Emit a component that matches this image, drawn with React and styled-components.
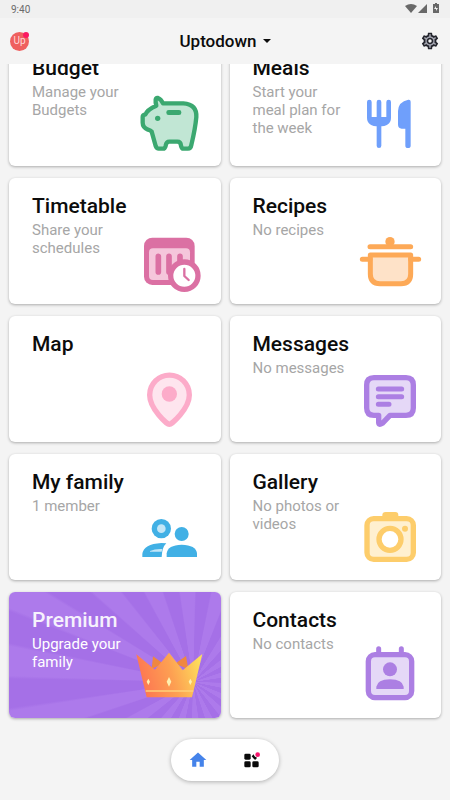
import React, { useLayoutEffect, useRef } from 'react';
import styled, { createGlobalStyle } from 'styled-components';
import { MdHome, MdOutlineSettings } from 'react-icons/md';

const GlobalStyle = createGlobalStyle`
  * {
    box-sizing: border-box;
  }

  body {
    margin: 0;
    background: #f4f4f4;
    font-family: Roboto, sans-serif;
    color: #0c0c0c;
  }

  button {
    font-family: inherit;
    color: inherit;
    border: none;
    cursor: pointer;
  }
`;

const Screen = styled.div`
  height: 100vh;
  display: flex;
  flex-direction: column;
  position: relative;
`;

const StatusBar = styled.div`
  display: flex;
  align-items: center;
  justify-content: space-between;
  height: 18px;
  padding: 0 11px;
  background: #f0f0f0;
  color: #6b6b6b;
  font-size: 10px;
  flex-shrink: 0;
`;

const Header = styled.header`
  display: grid;
  grid-template-columns: 20px 1fr 20px;
  align-items: center;
  height: 46px;
  padding: 0 10px;
  flex-shrink: 0;
`;

const Avatar = styled.button`
  width: 19px;
  height: 19px;
  padding: 0;
  border-radius: 50%;
  background: #ef605f;
  color: #ffd9d9;
  font-size: 10px;
  line-height: 18px;
  text-align: center;
  position: relative;

  &::after {
    content: '';
    position: absolute;
    top: 0;
    right: 0;
    width: 6px;
    height: 6px;
    border-radius: 50%;
    background: #fb1a62;
  }
`;

const CircleName = styled.button`
  display: flex;
  align-items: center;
  justify-content: center;
  gap: 6px;
  background: none;
  padding: 0;
  font-size: 17px;
  font-weight: 500;
  line-height: 24px;
`;

const SettingsButton = styled.button`
  display: flex;
  justify-content: center;
  padding: 0;
  background: radial-gradient(circle, transparent 2px, #a3a5b0 3px 6px, transparent 7px);
  color: #23242c;
`;

const Content = styled.main`
  flex: 1;
  min-height: 0;
  overflow-y: auto;
  scrollbar-width: none;
`;

const CardGrid = styled.div`
  display: grid;
  grid-template-columns: 1fr 1fr;
  gap: 12px 9px;
  padding: 12px 9px 82px;
`;

const Card = styled.button`
  display: flex;
  align-items: flex-start;
  justify-content: space-between;
  min-height: 126px;
  padding: 16px 15px 6px 23px;
  border-radius: 6px;
  text-align: left;
  background: ${props => props.$premium
    ? 'repeating-conic-gradient(from 12deg at 184px 90px, #ad7aeb 0deg 9deg, #a570e7 10deg 19deg, #ad7aeb 20deg)'
    : '#ffffff'};
  color: ${props => props.$premium ? '#ffffff' : '#0c0c0c'};
  box-shadow: 0 1px 3px rgba(0, 0, 0, 0.3);
`;

const CardText = styled.span`
  display: flex;
  flex-direction: column;
  gap: 3px;
  width: 98px;
`;

const CardTitle = styled.span`
  font-size: 21px;
  font-weight: 500;
  line-height: 24px;
  opacity: ${props => props.$premium ? 0.9 : 1};
`;

const CardInfo = styled.span`
  font-size: 15px;
  line-height: 18px;
  color: ${props => props.$premium ? '#ffffff' : '#a6a6a6'};
`;

const CardIcon = styled.svg`
  width: 72px;
  height: 72px;
  flex-shrink: 0;
  align-self: flex-end;
`;

const BottomNav = styled.nav`
  position: absolute;
  bottom: 19px;
  left: 50%;
  transform: translateX(-50%);
  display: flex;
  height: 42px;
  width: 108px;
  border-radius: 21px;
  background: #ffffff;
  box-shadow: 0 1px 4px rgba(0, 0, 0, 0.28);
`;

const NavButton = styled.button`
  flex: 1;
  display: flex;
  align-items: center;
  justify-content: center;
  padding: 0;
  background: none;
  color: ${props => props.$active ? '#4583ea' : '#0a0a0a'};
`;

const PiggyIcon = () => (
  <CardIcon viewBox="12 9 216 216">
    <path
      d="M84 39 Q93 42 99 55 H160 Q201 58 199 96 Q196 130 184 180 Q182 191 174 191 H160 Q155 191 153 182 Q152 170 142 170 H118 Q109 170 107 182 Q105 191 99 191 H86 Q80 191 77 183 L65 140 Q62 136 54 134 Q38 127 38 113 V96 Q38 89 46 89 Q51 74 79 62 Q76 52 77 44 Q78 38 84 39Z"
      fill="#c1e6d4" stroke="#3ba870" strokeWidth="13" strokeLinejoin="round"
    />
    <circle cx="83" cy="100" r="8" fill="#3ba870" />
    <rect x="109" y="75" width="45" height="15" rx="7" fill="#3ba870" />
  </CardIcon>
);

const MealsIcon = () => (
  <CardIcon viewBox="12 9 216 216" fill="#6f9ffb">
    <path
      d="M58 51 V98 Q58 117 87 117 Q116 117 116 98 V51 M87 51 V182"
      fill="none" stroke="#6f9ffb" strokeWidth="14" strokeLinecap="round"
    />
    <path d="M58 96 H116 V104 Q112 121 87 121 Q62 121 58 104Z" />
    <path d="M182 50 V182 Q182 189 174 189 Q166 189 166 182 V131 H155 Q144 131 144 118 V78 Q145 50 175 44 Q182 43 182 50Z" />
  </CardIcon>
);

const TimetableIcon = () => (
  <CardIcon viewBox="12 3 216 216">
    <rect x="42" y="38" width="152" height="142" rx="25" fill="#db70a3" />
    <rect x="57" y="70" width="123" height="95" rx="12" fill="#f5c6db" />
    <path d="M85 94 V141 M117 94 V141 M150 94 V141" stroke="#db70a3" strokeWidth="17" strokeLinecap="round" />
    <circle cx="163" cy="152" r="41" fill="#ffffff" stroke="#db70a3" strokeWidth="16" />
    <path d="M163 132 V153 L176 165" fill="none" stroke="#db70a3" strokeWidth="7" strokeLinecap="round" strokeLinejoin="round" />
  </CardIcon>
);

const RecipesIcon = () => (
  <CardIcon viewBox="12 3 216 216">
    <path d="M61 90 H182 V147 Q182 176 153 176 H90 Q61 176 61 147Z" fill="#fee2c8" stroke="#fda957" strokeWidth="15" strokeLinejoin="round" />
    <path d="M60 65 H182 M37 103 H60 M182 103 H206" stroke="#fda957" strokeWidth="15" strokeLinecap="round" />
    <circle cx="120" cy="50" r="14" fill="#fda957" />
  </CardIcon>
);

const MapIcon = () => (
  <CardIcon viewBox="12 -3 216 216">
    <path d="M118 178 C112 178 59 132 59 90 A59 59 0 0 1 178 90 C178 132 124 178 118 178Z" fill="#fee5ee" stroke="#fcabc9" strokeWidth="16" />
    <circle cx="118" cy="87" r="23" fill="#fcabc9" />
  </CardIcon>
);

const MessagesIcon = () => (
  <CardIcon viewBox="12 -3 216 216">
    <path
      d="M72 38 H168 Q190 38 190 60 V129 Q190 151 168 151 H120 L97 175 Q86 182 86 172 V151 H72 Q50 151 50 129 V60 Q50 38 72 38Z"
      fill="#e5d8f7" stroke="#ac7fe3" strokeWidth="16" strokeLinejoin="round"
    />
    <path d="M85 72 H155 M85 95 H155 M85 118 H117" stroke="#ac7fe3" strokeWidth="15" strokeLinecap="round" />
  </CardIcon>
);

const FamilyIcon = () => (
  <CardIcon viewBox="12 -9 216 216" fill="#41b0e5">
    <circle cx="94" cy="71" r="29" />
    <circle cx="94" cy="71" r="13" fill="#c3e6f7" />
    <circle cx="155" cy="87" r="21" />
    <path d="M37 156 V147 Q41 117 94 114 L109 115 Q96 127 95 156Z" />
    <path d="M60 138 Q75 131 97 132 L95 140 H60Z" fill="#c3e6f7" />
    <path d="M110 156 V145 Q113 120 155 119 Q198 120 201 145 V156Z" />
  </CardIcon>
);

const GalleryIcon = () => (
  <CardIcon viewBox="12 -9 216 216">
    <path d="M97 40 V30 Q97 21 107 21 H136 Q145 21 145 30 V40Z" fill="#fdcd6b" />
    <rect x="51" y="41" width="139" height="122" rx="20" fill="#fff0d0" stroke="#fdcd6b" strokeWidth="16" />
    <circle cx="120" cy="103" r="33" fill="#ffffff" stroke="#fdcd6b" strokeWidth="16" />
    <circle cx="165" cy="71" r="9" fill="#fdcd6b" />
  </CardIcon>
);

const CrownIcon = () => (
  <CardIcon viewBox="402 165 216 216">
    <defs>
      <linearGradient id="crown" x1="0" y1="0.4" x2="1" y2="0.2">
        <stop offset="0" stopColor="#fd7552" />
        <stop offset="0.5" stopColor="#fda052" />
        <stop offset="1" stopColor="#fde25c" />
      </linearGradient>
    </defs>
    <path d="M455 252 L459 214 L490 236Z M565 252 L558 213 L525 236Z" fill="#ef8740" />
    <path d="M409 208 L465 254 L507 203 L548 256 L607 207 L576 337 H440Z" fill="url(#crown)" />
    <path d="M437 318 H580" stroke="#fed07a" strokeWidth="5" />
    <path d="M507 276 L514 290 L507 305 L500 290Z M445 281 L450 290 L445 300 L440 290Z M571 281 L576 290 L571 300 L566 290Z" fill="#fff0b0" />
  </CardIcon>
);

const ContactsIcon = () => (
  <CardIcon viewBox="12 0 216 216" fill="#ac7fe3">
    <path d="M86 26 V44 M154 26 V44" stroke="#ac7fe3" strokeWidth="15" strokeLinecap="round" />
    <rect x="55" y="44" width="130" height="129" rx="20" fill="#e5d8f7" stroke="#ac7fe3" strokeWidth="16" />
    <circle cx="120" cy="88" r="21" />
    <path d="M79 147 V140 Q82 119 120 118 Q158 119 161 140 V147Z" />
  </CardIcon>
);

const StatusIcons = () => (
  <svg width="34" height="12" viewBox="0 0 34 12" fill="#686868">
    <path d="M0 3 Q6 -1 12 3 L6 10Z" />
    <path d="M22 1 V10 H13Z" />
    <path d="M30 0 H32 V1 H34 V10 H28 V1 H30Z" />
    <path d="M31 3 L29 6 H31 V8 L33 5 H31Z" fill="#f0f0f0" />
  </svg>
);

const AppsIcon = () => (
  <svg width="16" height="16" viewBox="0 0 48 48" fill="currentColor">
    <rect x="1" y="5" width="19" height="18" rx="4" />
    <rect x="1" y="28" width="19" height="18" rx="4" />
    <rect x="25" y="28" width="19" height="18" rx="4" />
    <path d="M23 13 L29 7 Q30 15 39 17 L36 22 Q33 25 30 21Z" />
    <circle cx="41" cy="8" r="7" fill="#f5146c" />
  </svg>
);

const cards = [
  { title: 'Budget', info: 'Manage your Budgets', Icon: PiggyIcon },
  { title: 'Meals', info: 'Start your meal plan for the week', Icon: MealsIcon },
  { title: 'Timetable', info: 'Share your schedules', Icon: TimetableIcon },
  { title: 'Recipes', info: 'No recipes', Icon: RecipesIcon },
  { title: 'Map', Icon: MapIcon },
  { title: 'Messages', info: 'No messages', Icon: MessagesIcon },
  { title: 'My family', info: '1 member', Icon: FamilyIcon },
  { title: 'Gallery', info: 'No photos or videos', Icon: GalleryIcon },
  { title: 'Premium', info: 'Upgrade your family', Icon: CrownIcon, premium: true },
  { title: 'Contacts', info: 'No contacts', Icon: ContactsIcon },
];

export default () => {
  const contentRef = useRef(null);

  // open on the last cards of the list
  useLayoutEffect(() => {
    contentRef.current.scrollTop = contentRef.current.scrollHeight;
  }, []);

  return (
    <>
      <GlobalStyle />
      <Screen>
        <StatusBar>
          <span>9:40</span>
          <StatusIcons />
        </StatusBar>

        <Header>
          <Avatar>Up</Avatar>
          <CircleName>
            Uptodown
            <svg width="8" height="4" viewBox="0 0 8 4">
              <path d="M0 0 H8 L4 4Z" fill="#0c0c0c" />
            </svg>
          </CircleName>
          <SettingsButton aria-label="Settings">
            <MdOutlineSettings size={20} />
          </SettingsButton>
        </Header>

        <Content ref={contentRef}>
          <CardGrid>
            {cards.map(({ title, info, Icon, premium }) => (
              <Card key={title} $premium={premium}>
                <CardText>
                  <CardTitle $premium={premium}>{title}</CardTitle>
                  {info && <CardInfo $premium={premium}>{info}</CardInfo>}
                </CardText>
                <Icon />
              </Card>
            ))}
          </CardGrid>
        </Content>

        <BottomNav>
          <NavButton $active aria-label="Home">
            <MdHome size={20} />
          </NavButton>
          <NavButton aria-label="Apps">
            <AppsIcon />
          </NavButton>
        </BottomNav>
      </Screen>
    </>
  );
};
